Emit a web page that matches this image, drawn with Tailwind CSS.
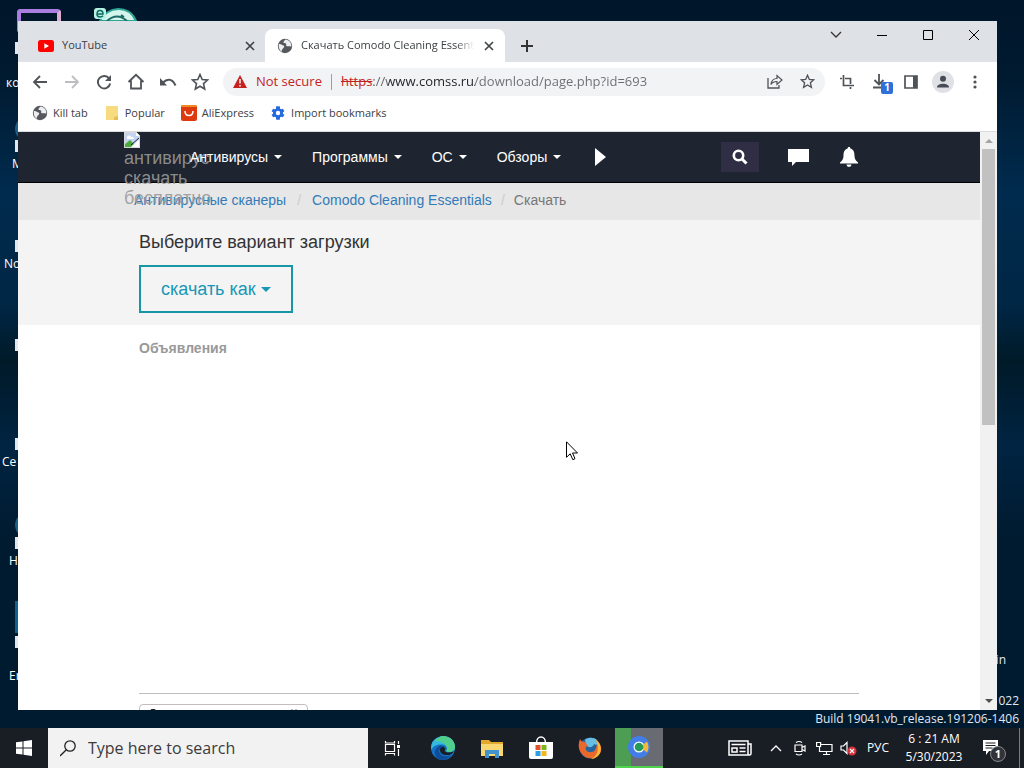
<!DOCTYPE html>
<html lang="ru">
<head>
<meta charset="utf-8">
<title>Скачать Comodo Cleaning Essentials</title>
<script src="https://cdn.jsdelivr.net/npm/@tailwindcss/browser@4"></script>
</head>
<body class="h-screen overflow-hidden bg-[#001529] font-['Open_Sans',sans-serif] text-xs text-[#3c4043]">
<svg class="hidden">
  <symbol id="globe" viewBox="0 0 16 16"><circle cx="8" cy="8" r="7.200" fill="#55585d"/><path d="M2 6c2-.5 3 1 4.500 1.500S7 9.500 6 10.500 4.500 12.500 4.800 13.700C2.500 12.500 1.200 9 2 6zM8.500 1.600c-.8 1.200-2.400 1.800-2 3 .5 1 2 .2 2.600 1.200.6.900-.6 1.800.4 2.300 1.500.5 2.600-.4 4.800.6.300-3.600-2-6.900-5.800-7.100z" fill="#eceef1"/></symbol>
  <symbol id="x" viewBox="0 0 10 10"><path d="M1 1l8 8M9 1L1 9" fill="none" stroke="currentColor" stroke-width="1.600"/></symbol>
  <symbol id="star" viewBox="0 0 18 18"><path d="M9 1.500l2.200 5 5.300.5-4 3.600 1.200 5.400L9 13.200 4.300 16l1.200-5.400-4-3.600 5.300-.5z" fill="none" stroke="currentColor" stroke-width="1.600"/></symbol>
</svg>
<main class="relative h-full overflow-hidden bg-[linear-gradient(180deg,#00162a_0%,#001a30_10%,#002b4e_25%,#002644_40%,#001a28_47%,#002442_58%,#001b30_70%,#001a30_90%)]">

  <!-- desktop shortcuts -->
  <div class="absolute top-[9px] left-[17px] h-6 w-11 rounded border-4 border-[#a87fe0] border-r-[#dcaed0]"></div>
  <svg class="absolute top-[7px] left-[93px]" width="48" height="24" viewBox="0 0 48 24"><path d="M7 14C14-1 36-3 43 14z" fill="#d4f5ec" stroke="#2fa596" stroke-width="2"/><path d="M14 14q10-9 20 0M28 8l3 2" fill="none" stroke="#1d6a66" stroke-width="2"/><rect x="1" y="1" width="12" height="11" rx="3" fill="#b5f3e4"/><path d="M4 7h6q0-3.500-3-3.500T4 7q0 3 3 3 2 0 3-1.200" fill="none" stroke="#116a60" stroke-width="1.500"/></svg>
  <div class="absolute top-[42px] left-[15px] h-3 w-4 bg-slate-200"></div>
  <div class="absolute top-[117px] left-[15px] size-6 rounded-full bg-[#1a5f86]"></div>
  <div class="absolute top-[140px] left-[15px] h-3 w-4 bg-slate-200"></div>
  <div class="absolute top-[240px] left-[15px] h-3 w-4 bg-slate-200"></div>
  <div class="absolute top-[339px] left-[15px] h-3 w-4 bg-slate-200"></div>
  <div class="absolute top-[438px] left-[15px] h-3 w-4 bg-slate-200"></div>
  <div class="absolute top-[513px] left-[15px] size-6 rounded-full bg-[#1a5f86]"></div>
  <div class="absolute top-[537px] left-[15px] h-3 w-4 bg-slate-200"></div>
  <div class="absolute top-[601px] left-[15px] h-8 w-4 bg-[#12618c]"></div>
  <div class="absolute top-[636px] left-[15px] h-3 w-4 bg-slate-200"></div>
  <div class="absolute top-[75px] left-[6px] leading-4 text-white">ко</div>
  <div class="absolute top-[156px] left-[12px] leading-4 text-white">M</div>
  <div class="absolute top-[256px] left-[4px] leading-4 text-white">No</div>
  <div class="absolute top-[454px] left-[2px] leading-4 text-white">Ce</div>
  <div class="absolute top-[553px] left-[9px] leading-4 text-white">H</div>
  <div class="absolute top-[668px] left-[9px] leading-4 text-white">Er</div>
  <div class="absolute top-[652px] right-[18px] leading-4 text-slate-200">in</div>
  <div class="absolute right-[5px] bottom-10 text-right leading-[18px] text-slate-200"><p>022</p><p>Build 19041.vb_release.191206-1406</p></div>

  <!-- browser window -->
  <section class="absolute top-[21px] right-[27px] bottom-[58px] left-[18px] flex flex-col overflow-hidden bg-white">
    <header class="flex h-[41px] shrink-0 items-end bg-[#dee1e6] text-[11px]">
      <div class="flex h-[33px] w-[247px] items-center gap-2 pr-[10px] pl-5">
        <svg width="16" height="12" viewBox="0 0 16 12"><rect width="16" height="12" rx="2.500" fill="#f00"/><path d="M6.300 3.200v5.600L11 6z" fill="#fff"/></svg>
        <span class="flex-1">YouTube</span>
        <button aria-label="Close tab"><svg class="size-[10px]"><use href="#x"/></svg></button>
      </div>
      <div class="flex h-[33px] w-60 items-center rounded-t-lg bg-white pr-[11px] pl-3">
        <svg class="size-4 shrink-0"><use href="#globe"/></svg>
        <span class="mr-[10px] ml-2 flex-1 overflow-hidden mask-r-from-90% whitespace-nowrap">Скачать Comodo Cleaning Essentials</span>
        <button aria-label="Close tab" class="shrink-0"><svg class="size-[10px]"><use href="#x"/></svg></button>
      </div>
      <button aria-label="New tab" class="flex h-[33px] w-11 items-center justify-center"><svg width="12" height="12"><path d="M6 0v12M0 6h12" stroke="#333" stroke-width="2"/></svg></button>
      <div class="ml-auto flex self-start text-black">
        <button aria-label="Search tabs" class="flex h-7 w-[46px] items-center justify-center"><svg width="12" height="8"><path d="M1 1l5 5 5-5" fill="none" stroke="#333" stroke-width="1.300"/></svg></button>
        <button aria-label="Minimize" class="flex h-7 w-[46px] items-center justify-center"><svg width="10" height="1"><path d="M0 .5h10" stroke="#000"/></svg></button>
        <button aria-label="Maximize" class="flex h-7 w-[46px] items-center justify-center"><svg width="10" height="10"><path d="M.5.5h9v9h-9z" fill="none" stroke="#000"/></svg></button>
        <button aria-label="Close" class="flex h-7 w-[46px] items-center justify-center"><svg width="10" height="10"><path d="M0 0l10 10M10 0L0 10" stroke="#000"/></svg></button>
      </div>
    </header>

    <div class="flex h-[39px] shrink-0 items-center px-[6px] text-[#4f5358]">
      <button aria-label="Back" class="flex w-8 justify-center"><svg width="16" height="16"><path d="M15 8H2M8 2L2 8l6 6" fill="none" stroke="currentColor" stroke-width="1.800"/></svg></button>
      <button aria-label="Forward" class="flex w-8 justify-center text-[#bcbec1]"><svg width="16" height="16"><path d="M1 8h13M8 2l6 6-6 6" fill="none" stroke="currentColor" stroke-width="1.800"/></svg></button>
      <button aria-label="Reload" class="flex w-8 justify-center"><svg width="16" height="16"><path d="M13.200 4.600A6.200 6.200 0 1 0 14.200 9.500" fill="none" stroke="currentColor" stroke-width="1.900"/><path d="M15 1v6H9z" fill="currentColor"/></svg></button>
      <button aria-label="Home" class="flex w-8 justify-center"><svg width="18" height="17"><path d="M1.500 9L9 1.800 16.500 9M4 7.500v8h10v-8" fill="none" stroke="currentColor" stroke-width="1.800"/></svg></button>
      <button aria-label="Undo" class="flex w-8 justify-center"><svg width="18" height="12"><path d="M4 6.500C9 1.500 14 3.500 16.500 9.500" fill="none" stroke="currentColor" stroke-width="2"/><path d="M1 2v7.500h7z" fill="currentColor"/></svg></button>
      <button aria-label="Favorites" class="flex w-8 justify-center"><svg class="size-[18px]"><use href="#star"/></svg></button>
      <div class="mr-[6px] ml-[7px] flex h-7 min-w-0 flex-1 items-center rounded-full bg-[#f1f3f4] pr-[10px] pl-[10px] text-[13px]">
        <svg width="14" height="13"><path d="M7 0l7 13H0z" fill="#c5221f"/><path d="M7 4v4.500M7 10v1.500" stroke="#fff" stroke-width="1.400"/></svg>
        <span class="ml-[9px] text-[#c5221f]">Not secure</span>
        <span class="mr-[9px] ml-[9px] h-4 w-px bg-[#9aa0a6]"></span>
        <span class="text-[#c5221f] line-through">https</span>
        <input aria-label="Address" value="://www.comss.ru/download/page.php?id=693" class="min-w-0 flex-1 bg-[linear-gradient(90deg,#5f6368_0_16px,#202124_16px_103px,#6a6e73_103px)] bg-clip-text text-transparent outline-none">
        <button aria-label="Share" class="flex w-8 justify-center"><svg width="16" height="15"><path d="M1 4v10h11v-3" fill="none" stroke="#4f5358" stroke-width="1.300"/><path d="M4 10.500C4.500 6 7 4.500 10 4.500V1.500L15 6l-5 4.500v-3C7.500 7.500 5.500 8 4 10.500z" fill="none" stroke="#4f5358" stroke-width="1.200"/></svg></button>
        <button aria-label="Bookmark" class="flex w-6 justify-center pl-2 text-[#4f5358]"><svg class="size-[15px] shrink-0"><use href="#star"/></svg></button>
      </div>
      <button aria-label="Crop" class="flex w-8 justify-center"><svg width="14" height="14"><path d="M3.500 0v10.500H14M0 3.500h2M5 3.500h5.500V9M10.500 12v2" fill="none" stroke="currentColor" stroke-width="1.700"/></svg></button>
      <button aria-label="Downloads" class="relative flex w-8 justify-center"><svg width="14" height="15"><path d="M7 0v10M2.500 6L7 10.500 11.500 6M1 13.500h12" fill="none" stroke="currentColor" stroke-width="1.800"/></svg><span class="absolute top-2 left-[18px] flex size-3 items-center justify-center rounded-xs bg-[#2f6fd8] text-[10px] font-bold text-white">1</span></button>
      <button aria-label="Side panel" class="flex w-8 justify-center"><svg width="14" height="14"><path d="M1 1h12v12H1z" fill="none" stroke="currentColor" stroke-width="1.700"/><path d="M9 1h4v12H9z" fill="currentColor"/></svg></button>
      <button aria-label="Profile" class="flex w-8 justify-center"><svg width="22" height="22"><circle cx="11" cy="11" r="11" fill="#dfe1e5"/><circle cx="11" cy="7.800" r="3" fill="#474b57"/><path d="M5 16.500c0-5 12-5 12 0z" fill="#474b57"/></svg></button>
      <button aria-label="Menu" class="flex w-8 justify-center"><svg width="4" height="14" fill="currentColor"><circle cx="2" cy="2" r="1.600"/><circle cx="2" cy="7" r="1.600"/><circle cx="2" cy="12" r="1.600"/></svg></button>
    </div>

    <nav aria-label="Bookmarks" class="flex h-[31px] shrink-0 items-center gap-4 border-b border-[#dadce0] pt-[2px] pb-2 pl-[14px] text-[11px]">
      <a href="#" class="flex items-center gap-[5px]"><svg class="size-4"><use href="#globe"/></svg>Kill tab</a>
      <a href="#" class="ml-[2px] flex items-center gap-[7px]"><svg width="12" height="14"><path d="M0 0h12v14H0z" fill="#f8db7e"/><path d="M8 14v-3l4-1v4z" fill="#e5bf55"/></svg>Popular</a>
      <a href="#" class="flex items-center gap-[5px]"><svg width="16" height="16"><rect width="16" height="16" rx="2" fill="#dd3a10"/><path d="M2 0h12a2 2 0 0 1 2 2H0a2 2 0 0 1 2-2z" fill="#f08a24"/><path d="M4 6c0 6 8 6 8 0" fill="none" stroke="#fff" stroke-width="1.500"/></svg>AliExpress</a>
      <a href="#" class="flex items-center gap-[5px]"><svg width="16" height="16" viewBox="0 0 24 24"><path fill="#2469df" fill-rule="evenodd" d="M19.400 13a7 7 0 0 0 0-2l2.200-1.700-2.200-3.800-2.600 1a7 7 0 0 0-1.700-1L14.700 2H9.300l-.4 3.500a7 7 0 0 0-1.700 1l-2.600-1-2.200 3.800L4.600 11a7 7 0 0 0 0 2l-2.200 1.700 2.200 3.800 2.600-1a7 7 0 0 0 1.700 1l.4 3.500h5.400l.4-3.500a7 7 0 0 0 1.700-1l2.600 1 2.200-3.800zM12 15.300a3.300 3.300 0 1 1 0-6.600 3.300 3.300 0 0 1 0 6.600z"/></svg>Import bookmarks</a>
    </nav>

    <div class="flex min-h-0 flex-1">
      <article class="min-w-0 flex-1 overflow-hidden font-['Liberation_Sans',sans-serif] text-sm leading-5 text-[#333]">
        <nav aria-label="Сайт" class="h-[51px] border-b border-black bg-[#1e2530]">
          <div class="relative mx-auto flex h-[50px] max-w-[750px] items-center px-[15px] text-white">
            <a href="#" class="absolute top-0 left-0 z-10 w-[92px] text-lg leading-5 text-[#999]/90">
              <svg width="16" height="16" viewBox="0 0 16 16"><path d="M0 0h12l4 4v12H0z" fill="#c3d4f3"/><path d="M12 0v4h4z" fill="#fff"/><path d="M0 16v-3l6-5 4 4-4 4z" fill="#4cab3b"/><path d="M6 16L16 7v9z" fill="#fff"/><path d="M7 13l8-7" stroke="#1e2530"/><path d="M.5.500h12l3 3v12H.5z" fill="none" stroke="#d9d9d9"/><path d="M3 6a2 2 0 0 1 4-1 2 2 0 0 1 3 2H3z" fill="#fff"/></svg>
              <span class="block">антивирус скачать бесплатно</span>
            </a>
            <div class="z-20 ml-[51px] flex items-center gap-[30px]">
              <button class="flex items-center gap-[6px]">Антивирусы<span class="border-x-4 border-t-4 border-x-transparent border-t-white"></span></button>
              <button class="flex items-center gap-[6px]">Программы<span class="border-x-4 border-t-4 border-x-transparent border-t-white"></span></button>
              <button class="flex items-center gap-[6px]">ОС<span class="border-x-4 border-t-4 border-x-transparent border-t-white"></span></button>
              <button class="flex items-center gap-[6px]">Обзоры<span class="border-x-4 border-t-4 border-x-transparent border-t-white"></span></button>
              <button aria-label="Ещё" class="ml-1"><svg width="11" height="18"><path d="M0 0l11 9-11 9z" fill="#fff"/></svg></button>
            </div>
            <button aria-label="Поиск" class="ml-auto flex h-[30px] w-[38px] items-center justify-center bg-[#302e44]"><svg width="16" height="16"><circle cx="6.500" cy="6.500" r="4.700" fill="none" stroke="#fff" stroke-width="2.600"/><path d="M10 10l4.500 4.500" stroke="#fff" stroke-width="3"/></svg></button>
            <button aria-label="Сообщения" class="ml-[29px]"><svg width="22" height="19"><path d="M0 1h21v13H8l-4 4v-4H0z" fill="#fff"/></svg></button>
            <button aria-label="Уведомления" class="mr-px ml-[30px]"><svg width="18" height="20"><path d="M9 0c1 0 1.400.6 1.400 1.500C14 2.500 14.500 6 14.500 9c0 3 1.500 5 3.500 6.500v1H0v-1C2 14 3.500 12 3.500 9c0-3 .5-6.500 4.100-7.500C7.600.6 8 0 9 0zM6.500 17.500h5a2.500 2.500 0 0 1-5 0z" fill="#fff"/></svg></button>
          </div>
        </nav>
        <div class="bg-[#e7e7e7]">
          <ol class="mx-auto flex h-[37px] max-w-[750px] items-center px-[10px] pb-1 text-[#777]">
            <li><a href="#" class="text-[#337ab7]">Антивирусные сканеры</a></li>
            <li class="w-[26px] text-center text-[#ccc]">/</li>
            <li><a href="#" class="text-[#337ab7]">Comodo Cleaning Essentials</a></li>
            <li class="w-[22px] text-center text-[#ccc]">/</li>
            <li>Скачать</li>
          </ol>
        </div>
        <div class="bg-[#f4f4f4]">
          <div class="mx-auto max-w-[750px] px-[15px] pt-3 pb-3">
            <h1 class="mb-[13px] text-lg leading-5">Выберите вариант загрузки</h1>
            <button class="flex h-12 items-center gap-[5px] border-2 border-[#1797a6] px-5 text-lg text-[#1797b5]">скачать как<span class="border-x-[5px] border-t-[5px] border-x-transparent border-t-[#1797b5]"></span></button>
          </div>
        </div>
        <div class="mx-auto max-w-[750px] px-[15px] pt-[13px]">
          <div class="h-[356px] border-b border-[#bdbdbd]"><h2 class="font-bold text-[#999]">Объявления</h2></div>
          <button aria-label="Поиск по странице" class="mt-[10px] flex w-[169px] justify-between rounded-sm border border-[#c4bcbf] px-[9px] pt-1 pb-2"><svg width="8" height="12"><circle cx="4" cy="3" r="2.500" fill="none" stroke="#222" stroke-width="1.500"/></svg><svg width="8" height="4"><path d="M1 1h2M5 1h2" stroke="#777"/></svg></button>
        </div>
      </article>
      <div class="flex w-[17px] flex-col items-center bg-[#f1f1f1]">
        <span class="mt-[7px] mb-[6px] border-x-4 border-b-4 border-x-transparent border-b-[#a3a3a3]"></span>
        <div class="h-[276px] w-[13px] bg-[#c1c1c1]"></div>
        <span class="mt-auto mb-[7px] border-x-4 border-t-4 border-x-transparent border-t-[#505050]"></span>
      </div>
    </div>
  </section>

  <svg class="absolute top-[441px] left-[566px]" width="13" height="20"><path d="M.5.800v15.500l3.700-3.500 2.600 5.900 2.200-1-2.500-5.700h5z" fill="#fff" stroke="#000"/></svg>

  <!-- taskbar -->
  <footer class="absolute inset-x-0 bottom-0 flex h-10 items-center bg-[#191d24] text-white">
    <button aria-label="Start" class="flex h-full w-12 items-center justify-center"><svg width="16" height="16" fill="#fff"><path d="M0 2.300l6.500-.9v6.100H0zM7.500 1.200L16 0v7.500H7.500zM0 8.500h6.500v6.100L0 13.700zM7.500 8.500H16V16l-8.500-1.200z"/></svg></button>
    <label class="flex h-full w-80 items-center gap-3 bg-[#f2f2f2] pl-3">
      <svg width="16" height="17"><circle cx="10" cy="6" r="5.200" fill="none" stroke="#222" stroke-width="1.300"/><path d="M6.300 9.700L0 16" stroke="#222" stroke-width="1.300"/></svg>
      <input aria-label="Search" placeholder="Type here to search" class="min-w-0 flex-1 text-base outline-none placeholder:text-[#3b3b3b]">
    </label>
    <button aria-label="Task view" class="flex w-12 justify-center"><svg width="17" height="17"><path d="M1.500 4.500h9v7h-9zM1.500 1v2h9V1M1.500 15.500v-2h9v2M14.500 1v3M14.500 9v7" fill="none" stroke="#fff" stroke-width="1.200"/><path d="M13 5h3v3h-3z" fill="#fff"/></svg></button>
    <div class="ml-[3px] flex h-full items-center gap-px">
      <button aria-label="Edge" class="flex w-12 justify-center"><svg width="24" height="24"><circle cx="12" cy="12" r="12" fill="#1672c4"/><path d="M.2 10C2-2 22-4 24 10c.5 6-6 7-9 5 2-2 1-6-3-6.500C7 8 2 9 .2 14z" fill="#36b9de"/><path d="M12 0c7 0 12 5 12 11 0 5-6 6-9 4 2-2 1-4 0-5C14 6 8 5 4 5 6 2 9 0 12 0z" fill="#4fcf8b"/><path d="M8 14c0 5 5 8 12 5-3 5-9 6-13 4-4-3-5-10 1-13 3-1 5 0 6 2-2-1-5 0-5 2z" fill="#0d4e99"/><path d="M9 14c0-3 3-4 5-2 .5 1 .2 2-.5 3 2 2 6 2 9 .5-1 3-5 4-8 3.500C11 18.500 9 17 9 14z" fill="#191d24"/></svg></button>
      <button aria-label="File Explorer" class="flex w-12 justify-center"><svg width="22" height="19"><path d="M0 1h8l2 2h12v4H0z" fill="#e2a92d"/><path d="M0 5h22v12H0z" fill="#f9d873"/><path d="M4 11h14v8h-4v-4H8v4H4z" fill="#4294cf"/></svg></button>
      <button aria-label="Store" class="flex w-12 justify-center"><svg width="24" height="24"><path d="M7.500 7c0-8 9-8 9 0" fill="none" stroke="#fff" stroke-width="1.500"/><path d="M0 6h24v15a2 2 0 0 1-2 2H2a2 2 0 0 1-2-2z" fill="#fff"/><path d="M6.500 9h5v5h-5z" fill="#e3502b"/><path d="M12.500 9h5v5h-5z" fill="#79b51c"/><path d="M6.500 15h5v5h-5z" fill="#2b9fe0"/><path d="M12.500 15h5v5h-5z" fill="#f6b51e"/></svg></button>
      <button aria-label="Firefox" class="flex w-12 justify-center"><svg width="24" height="24"><circle cx="12" cy="12" r="10.500" fill="#24659f"/><path d="M7 4c3-3 9-3 12 0 2 4-1 6-3 4-1 4-6 4-8 1z" fill="#68bde3"/><path d="M2 3c1 2 2 3 5 3l3 4c-2 0-3 2-2 4 2 3 7 3 9 0 2-4 3-7 1-10 4 2 6 7 5 11-2 8-14 10-19 3C0 14 0 8 2 3z" fill="#e9692c"/><path d="M18 4c4 3 6 8 4 13-2 4-6 6-9 6 6-3 9-9 5-19z" fill="#f6b73a"/></svg></button>
      <button aria-label="Browser" class="flex h-full w-12 items-center justify-center border-b-2 border-[#4fd24c] bg-linear-to-r from-[#4d9d53] from-33% to-[#686b71] to-33%"><svg width="24" height="24"><circle cx="12" cy="12" r="11" fill="#427de8"/><circle cx="12" cy="12" r="5.500" fill="#fff"/><path d="M13 12l7-5.500q3 5.500 0 11z" fill="#f6b73a"/><circle cx="12" cy="12" r="4.300" fill="#259b58"/></svg></button>
    </div>
    <div class="ml-auto flex h-full items-center">
      <button aria-label="News"><svg width="24" height="16"><path d="M1 1h19v14H1zM20 4h3v9.500a1.500 1.500 0 0 1-3 0M3.500 4.500h14M11.500 8h6M11.500 11.500h6M4 8h5v4H4z" fill="none" stroke="#fff" stroke-width="1.500"/></svg></button>
      <button aria-label="Hidden icons" class="ml-[18px]"><svg width="12" height="8"><path d="M1 7l5-5 5 5" fill="none" stroke="#fff" stroke-width="1.300"/></svg></button>
      <button aria-label="Meet Now" class="ml-3"><svg width="12" height="16"><path d="M1 5h7v6.500H1zM8 7.500L11 6v5L8 9.500M2 2.500q3-2 6 0M2 14q3 2 6 0" fill="none" stroke="#fff" stroke-width="1.200"/></svg></button>
      <button aria-label="Network" class="ml-[10px]"><svg width="17" height="15"><path d="M5 3.500h11v7H3.500V6M7 13.500h7M10.500 10.500v3M.6 1.500h4v4h-4z" fill="none" stroke="#fff" stroke-width="1.200"/></svg></button>
      <button aria-label="Volume" class="ml-[7px]"><svg width="17" height="15"><path d="M1 5h2.500L7 1.500v11L3.500 9H1z" fill="none" stroke="#fff" stroke-width="1.200"/><circle cx="12" cy="10" r="4.500" fill="#d8303c"/><path d="M10 8l4 4M14 8l-4 4" stroke="#fff" stroke-width="1.200"/></svg></button>
      <button class="ml-2 w-[26px]">РУС</button>
      <time class="ml-3 w-[62px] text-center leading-[18px] whitespace-nowrap"><span class="block">6 : 21 AM</span><span class="block">5/30/2023</span></time>
      <button aria-label="Notifications" class="relative mr-px ml-[17px] w-9 pr-4"><svg width="18" height="18"><path d="M1 1h15v11H7l-3 4v-4H1z" fill="#fff"/><path d="M3.500 4h10M3.500 6.500h10M3.500 9h7" stroke="#191d24"/></svg><span class="absolute top-[7px] left-2 flex size-4 items-center justify-center rounded-full border border-[#888] bg-[#30343a] text-[11px] font-bold">1</span></button>
      <span class="mr-1 h-full w-px bg-[#777b80]"></span>
    </div>
  </footer>
</main>
</body>
</html>
